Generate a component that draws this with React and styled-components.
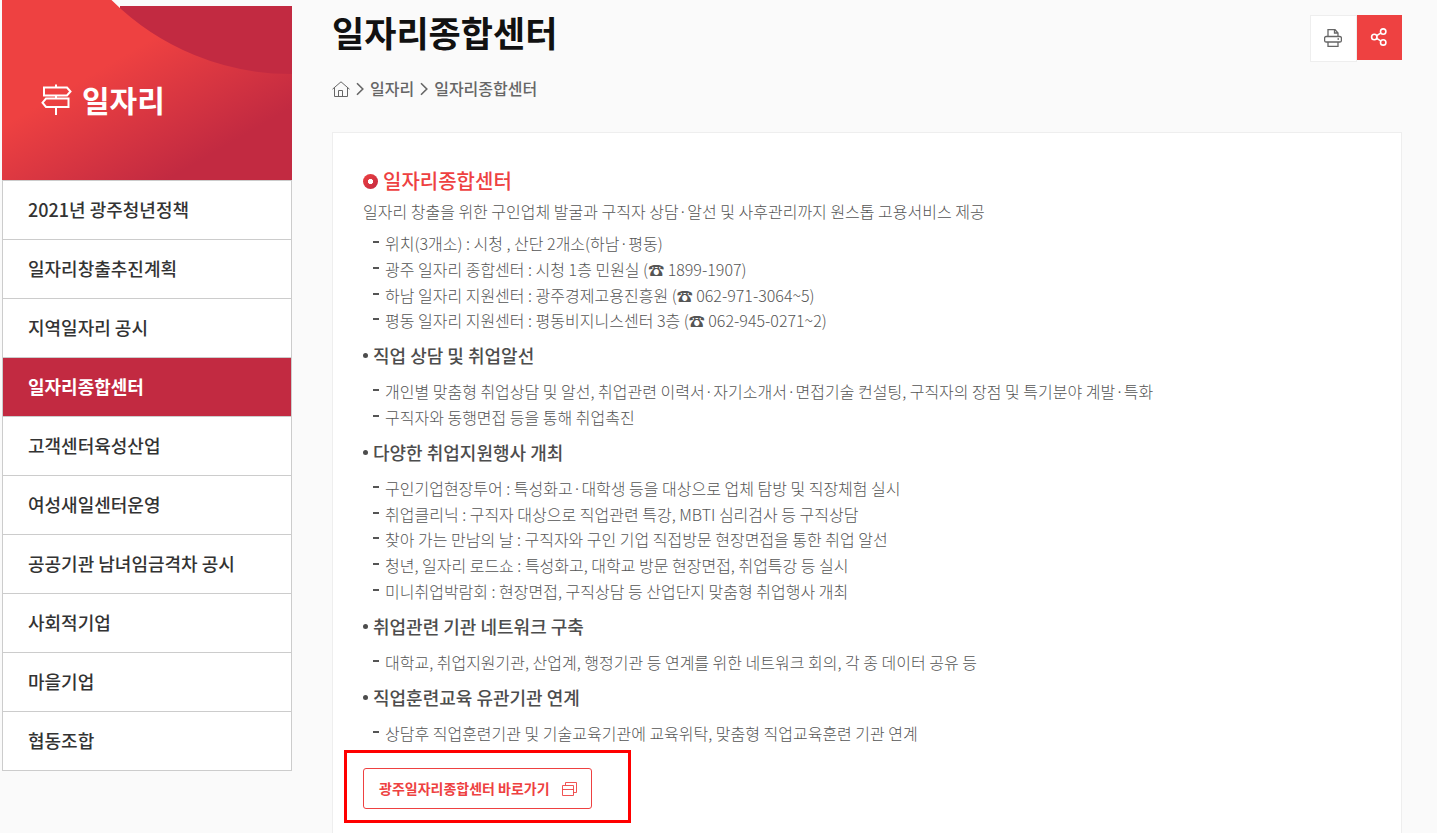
import styled, { createGlobalStyle, css } from 'styled-components';

const GlobalStyle = createGlobalStyle`
  * {
    box-sizing: border-box;
  }

  body {
    margin: 0;
    background: #fafafa;
    color: #555;
    font-family: 'Noto Sans CJK KR', 'Noto Sans', sans-serif;
    font-size: 16px;
    font-weight: 300;
    line-height: 1.6;
  }

  h1, h2, h3, p, ul {
    margin: 0;
    padding: 0;
  }

  ul {
    list-style: none;
  }

  a {
    color: inherit;
    text-decoration: none;
  }
`;

const Page = styled.div`
  display: flex;
  align-items: flex-start;
  gap: 40px;
  height: 833px;
  padding: 0 35px 0 2px;
  overflow: hidden;
`;

const Sidebar = styled.aside`
  flex: none;
  width: 290px;
`;

const Hero = styled.div`
  position: relative;
  display: flex;
  align-items: center;
  gap: 9px;
  height: 180px;
  padding: 20px 0 0 38px;
  color: #fff;

  h2 {
    padding-bottom: 2px;
    font-size: 30px;
    font-weight: 700;
    line-height: 44px;
  }

  svg,
  h2 {
    position: relative;
  }
`;

const HeroShape = styled.svg`
  && {
    position: absolute;
    top: 0;
    left: 0;
  }
`;

const Menu = styled.ul`
  border: 1px solid #ccc;
  background: #fff;
`;

const MenuItem = styled.li`
  height: 59px;
  padding-left: 25px;
  border-bottom: 1px solid #ccc;
  color: #333;
  font-size: 18px;
  font-weight: 500;
  line-height: 56px;

  &:last-child {
    height: 58px;
    border-bottom: 0;
  }

  ${({ $active }) =>
    $active &&
    css`
      background: #c22a41;
      color: #fff;
      font-weight: 700;
    `}
`;

const Main = styled.main`
  flex: 1;
`;

const PageHeader = styled.header`
  display: flex;
  justify-content: space-between;
  height: 132px;
`;

const PageTitle = styled.h1`
  padding-top: 6px;
  color: #111;
  font-size: 35px;
  font-weight: 700;
  line-height: 52px;
`;

const Breadcrumb = styled.nav`
  display: flex;
  align-items: center;
  height: 26px;
  margin-top: 18px;
  color: #666;
  font-weight: 500;

  svg {
    flex: none;
  }
`;

const Tools = styled.div`
  display: flex;
  align-items: flex-start;
  padding-top: 15px;
`;

const ToolButton = styled.button`
  display: flex;
  align-items: center;
  justify-content: center;
  width: 47px;
  height: 47px;
  padding: 0 2px 1px 0;
  border: 1px solid #eee;
  background: #fff;

  ${({ $primary }) =>
    $primary &&
    css`
      width: 45px;
      height: 45px;
      padding: 0 1px 1px 0;
      border: 0;
      background: #ee4141;
    `}
`;

const Card = styled.section`
  height: 760px;
  padding: 30px;
  border: 1px solid #eee;
  background: #fff;
`;

const SectionTitle = styled.h2`
  display: flex;
  align-items: center;
  gap: 5px;
  height: 36px;
  color: #ee4141;
  font-size: 20px;
  font-weight: 500;
`;

const Ring = styled.span`
  width: 15px;
  height: 15px;
  border-radius: 50%;
  background: radial-gradient(circle, #fff 2.3px, transparent 2.9px),
    linear-gradient(135deg, #ee4141, #c22a41);
`;

const DashList = styled.ul`
  padding-left: 22px;
  margin-top: ${({ $first }) => ($first ? '6.8px' : '0')};
`;

const DashItem = styled.li`
  position: relative;
  height: 25.6px;
  white-space: nowrap;

  &::before {
    content: '';
    position: absolute;
    top: 10px;
    left: -12px;
    width: 6px;
    height: 2px;
    background: #555;
  }
`;

const SubTitle = styled.h3`
  display: flex;
  align-items: center;
  gap: 5px;
  height: 45.6px;
  padding-bottom: 1.6px;
  color: #4d4d4d;
  font-size: 18px;
  font-weight: 500;

  &::before {
    content: '';
    width: 5px;
    height: 5px;
    border-radius: 50%;
    background: #4d4d4d;
  }
`;

const Highlight = styled.div`
  width: 287px;
  height: 73px;
  margin: 4px 0 0 -19px;
  padding: 15px 16px;
  border: 3px solid #f00;
`;

const LinkButton = styled.a`
  display: flex;
  align-items: center;
  justify-content: space-between;
  width: 229px;
  height: 41px;
  padding: 0 14px 1.6px 15px;
  border: 1px solid #ee4141;
  border-radius: 3px;
  color: #ee4141;
  font-size: 14px;
  font-weight: 700;

  svg {
    margin-top: 2px;
  }
`;

const menu = [
  '2021년 광주청년정책',
  '일자리창출추진계획',
  '지역일자리 공시',
  '일자리종합센터',
  '고객센터육성산업',
  '여성새일센터운영',
  '공공기관 남녀임금격차 공시',
  '사회적기업',
  '마을기업',
  '협동조합',
];

const centers = [
  '위치(3개소) : 시청 , 산단 2개소(하남·평동)',
  '광주 일자리 종합센터 : 시청 1층 민원실 (☎ 1899-1907)',
  '하남 일자리 지원센터 : 광주경제고용진흥원 (☎ 062-971-3064~5)',
  '평동 일자리 지원센터 : 평동비지니스센터 3층 (☎ 062-945-0271~2)',
];

const sections = [
  {
    title: '직업 상담 및 취업알선',
    items: [
      '개인별 맞춤형 취업상담 및 알선, 취업관련 이력서·자기소개서·면접기술 컨설팅, 구직자의 장점 및 특기분야 계발·특화',
      '구직자와 동행면접 등을 통해 취업촉진',
    ],
  },
  {
    title: '다양한 취업지원행사 개최',
    items: [
      '구인기업현장투어 : 특성화고·대학생 등을 대상으로 업체 탐방 및 직장체험 실시',
      '취업클리닉 : 구직자 대상으로 직업관련 특강, MBTI 심리검사 등 구직상담',
      '찾아 가는 만남의 날 : 구직자와 구인 기업 직접방문 현장면접을 통한 취업 알선',
      '청년, 일자리 로드쇼 : 특성화고, 대학교 방문 현장면접, 취업특강 등 실시',
      '미니취업박람회 : 현장면접, 구직상담 등 산업단지 맞춤형 취업행사 개최',
    ],
  },
  {
    title: '취업관련 기관 네트워크 구축',
    items: ['대학교, 취업지원기관, 산업계, 행정기관 등 연계를 위한 네트워크 회의, 각 종 데이터 공유 등'],
  },
  {
    title: '직업훈련교육 유관기관 연계',
    items: ['상담후 직업훈련기관 및 기술교육기관에 교육위탁, 맞춤형 직업교육훈련 기관 연계'],
  },
];

function SignpostIcon() {
  return (
    <svg width="33" height="32" viewBox="0 0 33 32" fill="none" stroke="#fff" strokeWidth="2">
      <path d="M16 .5v3M16 11.500v3M16 23V31" />
      <path d="M4 3.500h23l3.500 4-3.500 4H4zM28.500 14.500H6l-3.500 4.200L6 23h22.500z" />
    </svg>
  );
}

function HomeIcon() {
  return (
    <svg width="18" height="17" viewBox="0 0 18 17" fill="none" stroke="#666">
      <path d="M.5 8.200 9 .8l8.500 7.400M2.500 6.500v9h13v-9M6.500 15.500v-6h4v6" />
    </svg>
  );
}

function ArrowIcon() {
  return (
    <svg width="20" height="14" viewBox="0 0 20 14" fill="none" stroke="#666" strokeWidth="1.6">
      <path d="m7 1.200 5.800 5.800L7 12.800" />
    </svg>
  );
}

function PrintIcon() {
  return (
    <svg width="18" height="18" viewBox="0 0 18 18" fill="none" stroke="#666" strokeWidth="1.3">
      <path d="M4 7V.6h7L14 4v3M10.500.6V4H14" />
      <rect x=".6" y="7.500" width="16.800" height="5.500" rx="1.500" />
      <path d="M4 13v4.400h10V13M13.500 10h1.500" />
    </svg>
  );
}

function ShareIcon() {
  return (
    <svg width="18" height="18" viewBox="0 0 18 18" fill="none" stroke="#fff" strokeWidth="1.6">
      <circle cx="4.300" cy="9" r="2.700" />
      <circle cx="13.200" cy="3.600" r="2.700" />
      <circle cx="13.200" cy="14.400" r="2.700" />
      <path d="m6.700 7.600 4-2.500M6.700 10.400l4 2.500" />
    </svg>
  );
}

function WindowsIcon() {
  return (
    <svg width="15" height="14" viewBox="0 0 15 14" fill="none" stroke="#ee4141" strokeWidth=".9">
      <path d="M.5 3.500h11v10H.5zM.5 7.500h11M3.500 3.500v-3h11v10h-3" />
    </svg>
  );
}

function App() {
  return (
    <>
      <GlobalStyle />
      <Page>
        <Sidebar>
          <Hero>
            <HeroShape width="290" height="180" viewBox="0 0 290 180">
              <defs>
                <linearGradient id="hero" gradientUnits="userSpaceOnUse" x1="55" y1="94" x2="120" y2="206">
                  <stop offset="0" stopColor="#ee4141" />
                  <stop offset="1" stopColor="#c22a41" />
                </linearGradient>
              </defs>
              <path d="M118 6h172v100H118z" fill="#c22a41" />
              <path d="M0 0h109.500A254 254 0 0 0 290 74V180H0z" fill="url(#hero)" />
            </HeroShape>
            <SignpostIcon />
            <h2>일자리</h2>
          </Hero>
          <Menu>
            {menu.map((item) => (
              <MenuItem key={item} $active={item === '일자리종합센터'}>
                <a href="#">{item}</a>
              </MenuItem>
            ))}
          </Menu>
        </Sidebar>
        <Main>
          <PageHeader>
            <div>
              <PageTitle>일자리종합센터</PageTitle>
              <Breadcrumb>
                <HomeIcon />
                <ArrowIcon />
                <span>일자리</span>
                <ArrowIcon />
                <span>일자리종합센터</span>
              </Breadcrumb>
            </div>
            <Tools>
              <ToolButton aria-label="인쇄">
                <PrintIcon />
              </ToolButton>
              <ToolButton $primary aria-label="공유">
                <ShareIcon />
              </ToolButton>
            </Tools>
          </PageHeader>
          <Card>
            <SectionTitle>
              <Ring />
              일자리종합센터
            </SectionTitle>
            <p>일자리 창출을 위한 구인업체 발굴과 구직자 상담·알선 및 사후관리까지 원스톱 고용서비스 제공</p>
            <DashList $first>
              {centers.map((item) => (
                <DashItem key={item}>{item}</DashItem>
              ))}
            </DashList>
            {sections.map(({ title, items }) => (
              <div key={title}>
                <SubTitle>{title}</SubTitle>
                <DashList>
                  {items.map((item) => (
                    <DashItem key={item}>{item}</DashItem>
                  ))}
                </DashList>
              </div>
            ))}
            <Highlight>
              <LinkButton href="#">
                광주일자리종합센터 바로가기
                <WindowsIcon />
              </LinkButton>
            </Highlight>
          </Card>
        </Main>
      </Page>
    </>
  );
}

export default App;
